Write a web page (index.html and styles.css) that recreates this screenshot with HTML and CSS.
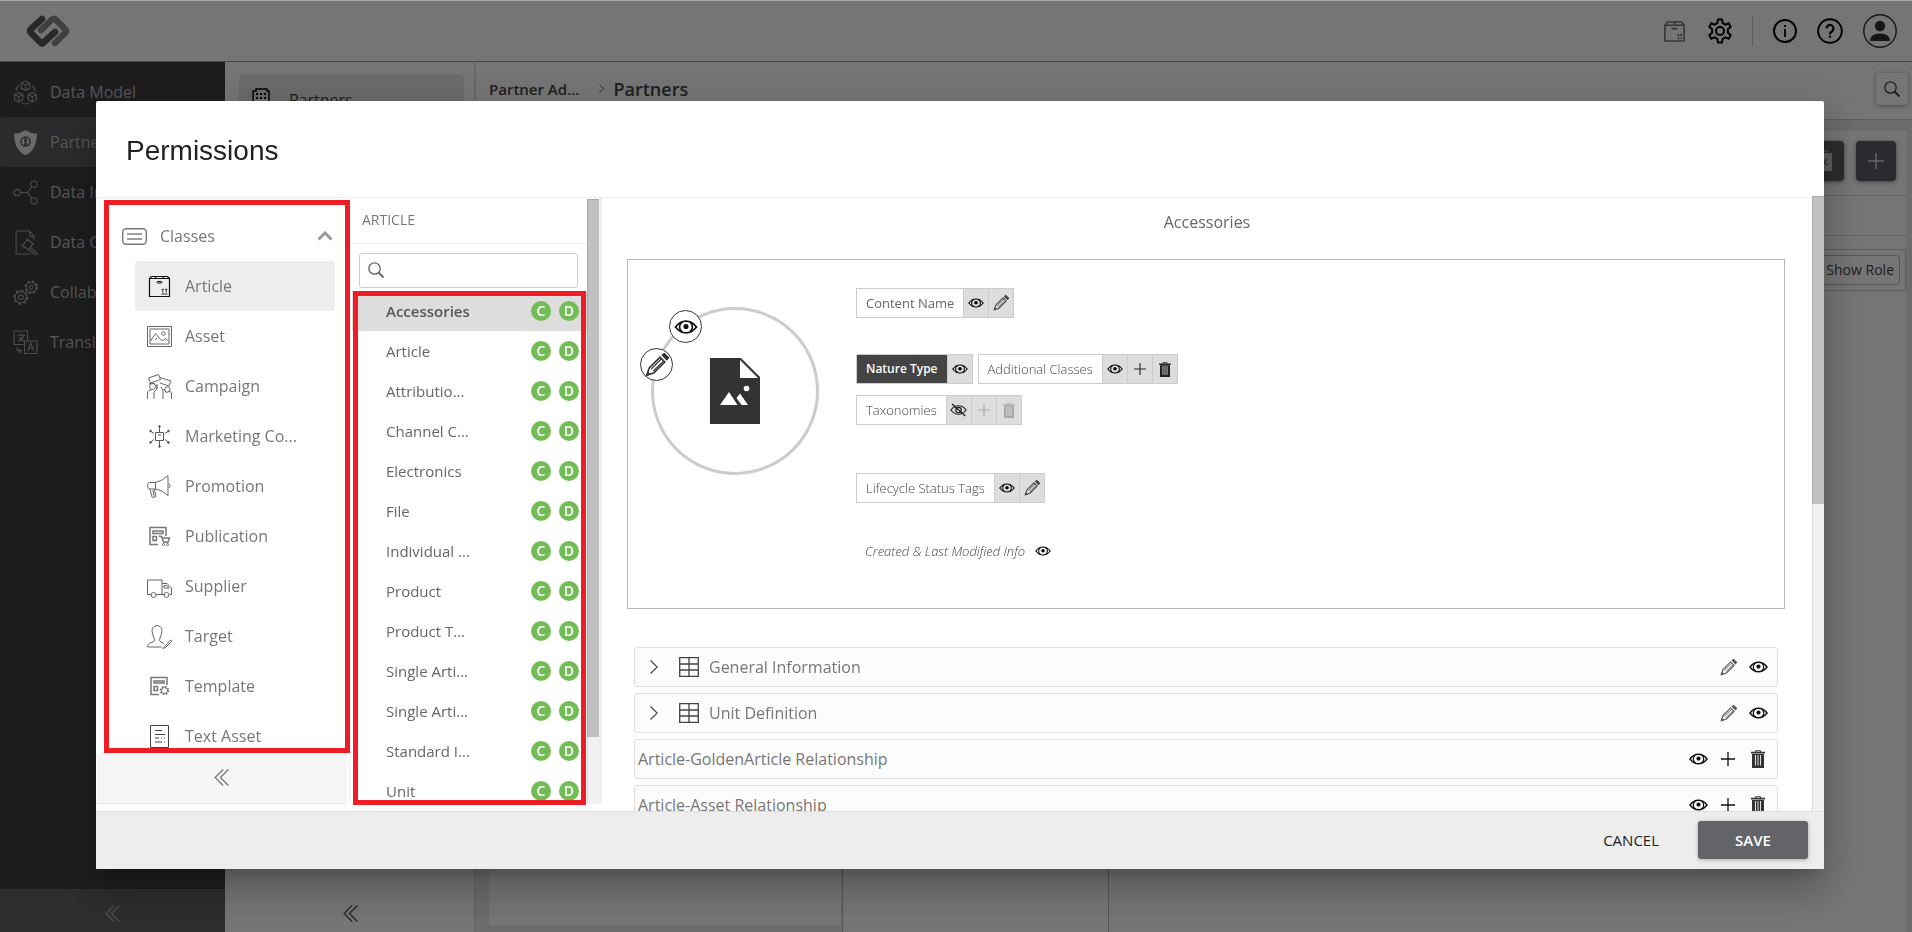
FILE: index.html
```html
<!DOCTYPE html>
<html lang="en">
<head>
<meta charset="utf-8">
<title>Permissions</title>
<link rel="stylesheet" href="styles.css">
</head>
<body>
<svg class="sprite" aria-hidden="true">
  <symbol id="eye" viewBox="0 0 20 12"><path d="M1 6C4 2.200 7 1 10 1s6 1.200 9 5c-3 3.800-6 5-9 5S4 9.800 1 6z" fill="none" stroke="currentColor" stroke-width="1.500"/><path d="M6.800 1.800a5 5 0 0 0 0 8.400M13.200 1.800a5 5 0 0 1 0 8.400" fill="none" stroke="currentColor" stroke-width="1.300"/><circle cx="10" cy="5.600" r="2.200" fill="currentColor"/></symbol>
  <symbol id="eye-off" viewBox="0 0 20 16"><path d="M1 8c3-3.800 6-5 9-5s6 1.200 9 5c-3 3.800-6 5-9 5S4 11.800 1 8z" fill="none" stroke="currentColor" stroke-width="1.400"/><circle cx="10" cy="8" r="3.200" fill="none" stroke="currentColor" stroke-width="1.400"/><path d="M2.500 1l15.500 14" stroke="currentColor" stroke-width="1.600"/></symbol>
  <symbol id="pencil" viewBox="0 0 20 20"><path d="M1.500 18.500l2-6L12.500 3.500l4 4-9 9z" fill="none" stroke="currentColor" stroke-width="1.300"/><path d="M14.500 1.800L16 .5 19.500 4 18.200 5.500z" fill="currentColor" stroke="currentColor" stroke-width="1.300"/><path d="M5 13.500L13.500 5M7 15l8.500-8.500" stroke="currentColor" stroke-width="1"/><path d="M1 19l1-4 3 3z" fill="currentColor"/></symbol>
  <symbol id="plus" viewBox="0 0 14 14"><path d="M7 0v14M0 7h14" stroke="currentColor" stroke-width="1.300"/></symbol>
  <symbol id="trash" viewBox="0 0 14 18"><path d="M4.500 2V.8h5V2" fill="none" stroke="currentColor"/><path d="M0 1.800h14v1.700H0zM1 4h12v14H1z" fill="currentColor"/><path d="M4.500 5v10.500M7 5v10.500M9.500 5v10.500" stroke="#ddd" stroke-width="1"/></symbol>
  <symbol id="search" viewBox="0 0 16 16"><circle cx="6.500" cy="6.500" r="5.700" fill="none" stroke="currentColor" stroke-width="1.300"/><path d="M10.500 10.500l5 5" stroke="currentColor" stroke-width="2"/></symbol>
  <symbol id="collapse" viewBox="0 0 14 16"><path d="M8.500.5L1 8l7.500 7.500M13.500.5L6 8l7.500 7.500" fill="none" stroke="currentColor" stroke-width="1.200"/></symbol>
  <symbol id="grid" viewBox="0 0 20 20"><path d="M.7.700h18.600v18.600H.7zM10 .7v18.600M.7 7h18.600M.7 13h18.600" fill="none" stroke="currentColor" stroke-width="1.300"/></symbol>
  <symbol id="next" viewBox="0 0 8 14"><path d="M.5.500L7.200 7 .5 13.500" fill="none" stroke="currentColor" stroke-width="1.200"/></symbol>
  <symbol id="box" viewBox="0 0 22 22"><path d="M1 4.500h20V21H1zM1 4.500L3.500 1h15L21 4.500M11 1v3.500M8 8h6" fill="none" stroke="currentColor" stroke-width="1.700"/><path d="M14 18.500h5M15 17v-3.500M18 17v-3.500M14 15l1-1.500 1 1.500M17 15l1-1.500 1 1.500" fill="none" stroke="currentColor"/></symbol>
</svg>

<div class="app">
  <header class="topbar">
    <svg class="logo" viewBox="0 0 45 32" aria-label="Logo" role="img"><g fill="none" stroke-width="6.500" stroke-linecap="round" stroke-linejoin="round"><path d="M17 4L6 14q-2 2 0 4l10 10q1 1 2 0l12-11" stroke="#585858"/><path d="M16 15L27 4.500q2-1.500 3.500 0L40 14q2 2 0 4L30 28" stroke="#8c8c8c"/></g></svg>
    <div class="tools">
      <button class="tool faded" aria-label="Articles"><svg width="21" height="21"><use href="#box"/></svg></button>
      <button class="tool gear" aria-label="Settings"><svg width="24" height="26" viewBox="0 0 24 26" fill="none" stroke="#000" stroke-width="2"><path d="M10 1.500h4l.7 3.700 2.500 1.400 3.500-1.300 2 3.500-2.800 2.400v3.600l2.800 2.400-2 3.500-3.500-1.300-2.500 1.400-.7 3.700h-4l-.7-3.700-2.500-1.400-3.500 1.300-2-3.500 2.800-2.400v-3.600L1.300 8.800l2-3.500 3.500 1.300 2.500-1.400z"/><circle cx="12" cy="13" r="4"/></svg></button>
      <span class="rule"></span>
      <button class="tool" aria-label="Information"><svg width="24" height="24" viewBox="0 0 24 24"><circle cx="12" cy="12" r="11" fill="none" stroke="#000" stroke-width="2"/><path d="M12 10v8M12 6v2" stroke="#000" stroke-width="1.800"/></svg></button>
      <button class="tool" aria-label="Help"><svg width="26" height="26" viewBox="0 0 26 26" fill="none" stroke="#000"><circle cx="13" cy="13" r="11.800" stroke-width="2"/><path d="M9.500 10.500a3.500 3.500 0 1 1 5.600 2.800Q13 14.500 13 16.500M13 17.800v2" stroke-width="2.200"/></svg></button>
      <button class="tool" aria-label="Account"><svg width="34" height="34" viewBox="0 0 34 34"><circle cx="17" cy="17" r="16.200" fill="none" stroke="#333" stroke-width="1.400"/><circle cx="17" cy="12" r="5.200" fill="#333"/><path d="M7 27q0-7.500 10-7.500T27 27z" fill="#333"/></svg></button>
    </div>
  </header>

  <div class="workspace">
    <nav class="sidebar">
      <a href="#" class="side"><svg viewBox="0 0 24 24"><path d="M12 1l4 2v5l-4 2-4-2V3zM8 3l4 2 4-2M12 5v5M5.500 12l4 2v5l-4 2-4-2v-5zM1.500 14l4 2 4-2M5.500 16v5M18.500 12l4 2v5l-4 2-4-2v-5zM14.500 14l4 2 4-2M18.500 16v5M6 5Q3 7 3 10.500M18 5q3 2 3 5.500M8.500 22q3.500 2 7 0"/></svg>Data Model</a>
      <a href="#" class="side active"><svg viewBox="0 0 24 24"><path d="M12 0q5 3.500 11 3.500Q23 19 12 24.500 1 19 1 3.500 7 3.500 12 0z" fill="#e6e6e6" stroke="none"/><circle cx="12" cy="11" r="4.300" stroke="#5f5f64" stroke-width="1.500"/><path d="M12 8v3.500M12 12v3" stroke="#5f5f64" stroke-width="2.500"/></svg>Partner Admin</a>
      <a href="#" class="side"><svg viewBox="0 0 24 24"><circle cx="4" cy="12" r="3"/><circle cx="20" cy="4" r="3"/><circle cx="20" cy="20" r="3"/><path d="M7 12h7l4-5.500M14 12l4 5.500"/></svg>Data Integration</a>
      <a href="#" class="side"><svg viewBox="0 0 24 24"><path d="M20 9V6l-4-5H3v22h14M16 1v5h4M9 15l5-6 5 4-4 6zM17 17l6 5.500-1.500 1.500-6-5.500M8 14l3 3M13 8l7 6"/></svg>Data Governance</a>
      <a href="#" class="side"><svg viewBox="0 0 24 24"><circle cx="7.500" cy="16.500" r="5.500"/><circle cx="7.500" cy="16.500" r="2.200"/><circle cx="17.500" cy="7" r="4.800"/><circle cx="17.500" cy="7" r="1.800"/><circle cx="7.500" cy="16.500" r="6.300" stroke-width="1.800" stroke-dasharray="2.400 2.500"/><circle cx="17.500" cy="7" r="5.600" stroke-width="1.800" stroke-dasharray="2.200 2.200"/></svg>Collaboration</a>
      <a href="#" class="side"><svg viewBox="0 0 24 24"><path d="M10 14H1V1h13v9M11 10.500h12v12H11zM4 5h8M8 3v2M10.500 5Q9 9 5 11M6 6.500q2 3.500 5 4M14 20l3-7.500 3 7.500M15 17.500h4M4 16v4h4M6 18l2 2-2 2"/></svg>Translations</a>
      <button class="collapse dark" aria-label="Collapse menu"><svg><use href="#collapse"/></svg></button>
    </nav>
    <nav class="subnav">
      <a href="#" class="partner"><svg width="20" height="24" viewBox="0 0 20 24" fill="none" stroke="#000"><path d="M1 24V3h3V1h11v2h2v21" stroke-width="1.400"/><path d="M4 6h12M4 10h12M4 14h12M4 18h8" stroke-width="1.800" stroke-dasharray="2 2"/><path d="M11 17l3-3 5 4" stroke-width="2"/></svg>Partners</a>
      <button class="collapse" aria-label="Collapse list"><svg><use href="#collapse"/></svg></button>
    </nav>
    <main class="main">
      <div class="crumbs"><b>Partner Ad...</b><svg width="5" height="9" viewBox="0 0 8 14"><use href="#next"/></svg><h2>Partners</h2><button class="find" aria-label="Search"><svg width="16" height="16"><use href="#search"/></svg></button></div>
      <div class="board">
        <div class="boardbar">
          <button class="square" aria-label="Delete"><svg width="18" height="22" viewBox="0 0 18 22"><path d="M1 3h16v18H1z" fill="#ccc"/><path d="M5 2V1h8v1" fill="none" stroke="#ccc"/><path d="M6 9l6 6M12 9l-6 6" stroke="#5f6066" stroke-width="1.500"/></svg></button>
          <button class="square" aria-label="Add"><svg width="16" height="16"><use href="#plus"/></svg></button>
        </div>
        <div class="strip"></div>
        <div class="columns">
          <div class="first"></div><div class="second"></div>
          <div class="third"><div class="rolebar"><button>Show Role</button></div></div>
        </div>
      </div>
    </main>
  </div>
</div>

<div class="overlay">
<section class="dialog" role="dialog" aria-labelledby="dlg-title">
  <header class="dialog-head"><h1 id="dlg-title">Permissions</h1></header>
  <div class="dialog-body">
    <aside class="classes">
      <div class="class-list">
        <button class="group"><svg width="25" height="17" viewBox="0 0 25 17" fill="none" stroke="#777" stroke-width="1.400"><rect x=".7" y=".7" width="23.600" height="15.600" rx="3.500"/><path d="M5 6h15M5 11h15" stroke="#444" stroke-width="1.200"/></svg><span>Classes</span><svg width="16" height="10" viewBox="0 0 16 10"><path d="M1.500 8.500L8 2l6.500 6.500" fill="none" stroke="#999" stroke-width="3"/></svg></button>
        <button class="klass on"><svg viewBox="0 0 25 25"><path d="M2.500 4.500h20v18h-20zM2.500 4.500l2-2h16l2 2M9 2.500L8 5M16 2.500l1 2.500" stroke="#111" stroke-width="1.200"/><rect x="10" y="7.500" width="5" height="1.500" rx=".8" stroke="#111"/><path d="M14.500 20h6M15.800 18.500v-3.500M19.200 18.500v-3.500M14.800 16l1-1.200 1 1.200M18.200 16l1-1.200 1 1.200" stroke="#333"/></svg>Article</button>
        <button class="klass"><svg viewBox="0 0 25 25"><path d="M.5 2.500h24v20H.5zM3 5h19v15H3zM3.500 17l5-7.500 5 6 3 1 2-2 3 2.500M8 16l2-2"/><circle cx="16.500" cy="9.500" r="1.800"/></svg>Asset</button>
        <button class="klass"><svg viewBox="0 0 25 25"><path d="M1.500 4l10-3.500 2 5-10 3.500zM13 3.500l11 3.500-2 5-9-3M.5 25v-7q1-2 4-2M7 25v-7l3-3V10M16 25v-8l-2-4M24.500 25v-6q-1-2-3-2M10 15l-1-4"/><circle cx="5.500" cy="12.500" r="3"/><circle cx="20.500" cy="15.500" r="2.700"/><path d="M2 10q3-2 6 0M16.500 15l3 4"/></svg>Campaign</button>
        <button class="klass"><svg viewBox="0 0 25 25"><path d="M8.500 8.500h8v8h-8zM11 11h3M12.500 8V3M12.500 17v5M7 9.500L4 7.500M7 15.500l-3 2.500M18 9.500l3-2M18 15.500l3 2.500" stroke="#555"/><g fill="#777" stroke="#444"><circle cx="12.500" cy="2.500" r=".8"/><circle cx="12.500" cy="22.500" r=".8"/><circle cx="3.500" cy="7" r=".8"/><circle cx="3.500" cy="18.500" r=".8"/><circle cx="21.500" cy="7" r=".8"/><circle cx="21.500" cy="18.500" r=".8"/></g></svg>Marketing Co...</button>
        <button class="klass"><svg viewBox="0 0 25 25"><path d="M3 8.500h5Q15 7.500 21 1.500v20Q15 16 9 15H3q-2.500 0-2.500-3.200T3 8.500zM8.500 8.500V15M3 15l2 8q2 .8 4-.5l-1.500-7.500M6 16l1 6M22 9.500q2.500 2 0 4.500"/></svg>Promotion</button>
        <button class="klass"><svg viewBox="0 0 25 25"><path d="M11 20.500H3v-17h16V12M6 7h10v2.500H6zM6 12.500h3.500v4H6zM12 12l2.500.5 2 5.500H21l1.500-4h-7" stroke="#777" stroke-width="1.500"/><circle cx="16.500" cy="20.500" r="1"/><circle cx="20.500" cy="20.500" r="1"/></svg>Publication</button>
        <button class="klass"><svg viewBox="0 0 25 25"><path d="M4 20.500H.5V6H15v14.500H9M15 9.500h5l4.500 4.500v6.500h-2M17.500 20.500H15M17 14v-2.500h3l2 2.500z"/><circle cx="6.500" cy="21" r="2.500"/><circle cx="19.500" cy="21" r="2.500"/></svg>Supplier</button>
        <button class="klass"><svg viewBox="0 0 25 25"><path d="M15 23H.5q0-4 5.500-5 2.500-1 1-4Q3 5 7 2.500q3-2 6 0 4 2.500 0 11.500-1.500 3 1 4l3 1.500M17.500 22.500l6-6.500q1.500 0 1 1.500l-6 6-2.500 1z"/></svg>Target</button>
        <button class="klass"><svg viewBox="0 0 25 25"><path d="M12 20.500H4v-17h16V11M7 7h10v2H7zM7 12.500h3.500v4H7z" stroke="#777" stroke-width="1.500"/><circle cx="17.500" cy="16.500" r="3"/><circle cx="17.500" cy="16.500" r="4" stroke-width="1.500" stroke-dasharray="1.500 1.640"/></svg>Template</button>
        <button class="klass"><svg viewBox="0 0 25 25"><path d="M3.500 1.500h18v22h-18zM8 6.500h7M8 10.500h10M8 14h4M8 18h7" stroke="#444"/><path d="M14 14h1M17 14h1M17 18h1" stroke="#444"/></svg>Text Asset</button>
      </div>
      <button class="collapse light" aria-label="Collapse classes"><svg><use href="#collapse"/></svg></button>
      <span class="mark mark-classes"></span>
    </aside>

    <div class="articles">
      <div class="article-col">
        <h3>ARTICLE</h3>
        <label class="searchbox"><svg width="16" height="16"><use href="#search"/></svg><input type="text" aria-label="Search articles"></label>
        <ul>
          <li class="on"><span>Accessories</span><i>C</i><i>D</i></li>
          <li><span>Article</span><i>C</i><i>D</i></li>
          <li><span>Attributio...</span><i>C</i><i>D</i></li>
          <li><span>Channel C...</span><i>C</i><i>D</i></li>
          <li><span>Electronics</span><i>C</i><i>D</i></li>
          <li><span>File</span><i>C</i><i>D</i></li>
          <li><span>Individual ...</span><i>C</i><i>D</i></li>
          <li><span>Product</span><i>C</i><i>D</i></li>
          <li><span>Product T...</span><i>C</i><i>D</i></li>
          <li><span>Single Arti...</span><i>C</i><i>D</i></li>
          <li><span>Single Arti...</span><i>C</i><i>D</i></li>
          <li><span>Standard I...</span><i>C</i><i>D</i></li>
          <li><span>Unit</span><i>C</i><i>D</i></li>
        </ul>
      </div>
      <div class="scroll"><div class="thumb tall"></div></div>
      <span class="mark mark-articles"></span>
    </div>

    <div class="detail">
      <h2>Accessories</h2>
      <div class="card">
        <div class="avatar">
          <svg width="50" height="66" viewBox="0 0 50 66"><path d="M0 0h31l19 19v47H0z" fill="#333"/><path d="M30 2v18h18z" fill="#fff"/><path d="M10 47l9-13 8.500 13zM26.500 40l3.500-4.500L38 47h-6.500z" fill="#fff"/><circle cx="36.500" cy="30.500" r="2.800" fill="#fff"/></svg>
          <button class="round see" aria-label="Image visible"><svg width="24" height="14"><use href="#eye"/></svg></button>
          <button class="round edit" aria-label="Edit image"><svg width="24" height="24"><use href="#pencil"/></svg></button>
        </div>
        <div class="tags">
          <div class="tag name"><span>Content Name</span><button aria-label="Visible"><svg class="i-eye"><use href="#eye"/></svg></button><button aria-label="Edit"><svg class="i-pen"><use href="#pencil"/></svg></button></div>
          <div class="tagrow">
            <div class="tag nature"><span>Nature Type</span><button aria-label="Visible"><svg class="i-eye"><use href="#eye"/></svg></button></div>
            <div class="tag"><span>Additional Classes</span><button aria-label="Visible"><svg class="i-eye"><use href="#eye"/></svg></button><button aria-label="Add"><svg class="i-plus"><use href="#plus"/></svg></button><button aria-label="Delete"><svg class="i-bin"><use href="#trash"/></svg></button></div>
          </div>
          <div class="tag taxo"><span>Taxonomies</span><button aria-label="Hidden"><svg class="i-off"><use href="#eye-off"/></svg></button><button class="dim" aria-label="Add"><svg class="i-plus"><use href="#plus"/></svg></button><button class="dim" aria-label="Delete"><svg class="i-bin"><use href="#trash"/></svg></button></div>
          <div class="tag life"><span>Lifecycle Status Tags</span><button aria-label="Visible"><svg class="i-eye"><use href="#eye"/></svg></button><button aria-label="Edit"><svg class="i-pen"><use href="#pencil"/></svg></button></div>
          <div class="info"><em>Created &amp; Last Modified Info</em><button aria-label="Visible"><svg class="i-eye"><use href="#eye"/></svg></button></div>
        </div>
      </div>
      <div class="sections">
        <div class="bar"><button class="open" aria-label="Expand"><svg width="8" height="14"><use href="#next"/></svg></button><svg class="i-grid"><use href="#grid"/></svg><span>General Information</span><button aria-label="Edit"><svg class="s-pen"><use href="#pencil"/></svg></button><button aria-label="Visible"><svg class="s-eye"><use href="#eye"/></svg></button></div>
        <div class="bar"><button class="open" aria-label="Expand"><svg width="8" height="14"><use href="#next"/></svg></button><svg class="i-grid"><use href="#grid"/></svg><span>Unit Definition</span><button aria-label="Edit"><svg class="s-pen"><use href="#pencil"/></svg></button><button aria-label="Visible"><svg class="s-eye"><use href="#eye"/></svg></button></div>
        <div class="bar"><span>Article-GoldenArticle Relationship</span><button aria-label="Visible"><svg class="s-eye"><use href="#eye"/></svg></button><button aria-label="Add"><svg class="s-plus"><use href="#plus"/></svg></button><button aria-label="Delete"><svg class="s-bin"><use href="#trash"/></svg></button></div>
        <div class="bar"><span>Article-Asset Relationship</span><button aria-label="Visible"><svg class="s-eye"><use href="#eye"/></svg></button><button aria-label="Add"><svg class="s-plus"><use href="#plus"/></svg></button><button aria-label="Delete"><svg class="s-bin"><use href="#trash"/></svg></button></div>
      </div>
    </div>
    <div class="scroll"><div class="thumb short"></div></div>
  </div>
  <footer class="dialog-foot"><button class="cancel">CANCEL</button><button class="save">SAVE</button></footer>
</section>
</div>
</body>
</html>
```
FILE: styles.css
```css
* { box-sizing: border-box; }
html, body { height: 100%; }
body {
  margin: 0;
  overflow: hidden;
  border-top: 1px solid #a9abab;
  background: #fff;
  color: #777;
  font: 16px/24px "Open Sans", "Noto Sans", sans-serif;
}
button { margin: 0; padding: 0; border: 0; background: none; color: inherit; font: inherit; }
h1, h2, h3, ul { margin: 0; padding: 0; font-weight: 400; }
a { color: inherit; text-decoration: none; }
svg { display: block; flex: none; }
.sprite { position: absolute; width: 0; height: 0; }

/* application behind the dialog */
.app { display: flex; flex-direction: column; height: 100%; }
.topbar {
  display: flex; align-items: center; justify-content: space-between;
  height: 61px; padding: 0 15px 0 25px; border-bottom: 1px solid #999;
}
.logo { width: 45px; height: 32px; }
.tools { display: flex; align-items: center; gap: 20px; }
.tool { display: flex; justify-content: center; }
.faded { width: 28px; color: #777; }
.rule { width: 1px; height: 30px; background: #ccc; }
.workspace { display: flex; flex: 1; min-height: 0; }
.sidebar { display: flex; flex-direction: column; width: 225px; padding-top: 5px; background: #414141; color: #bdbdbd; }
.side { display: flex; align-items: center; gap: 12px; height: 50px; padding-left: 13px; white-space: nowrap; }
.side svg { width: 25px; height: 25px; fill: none; stroke: #aaa; }
.side.active { border-radius: 4px; background: #5f5f64; }
.collapse { display: flex; align-items: center; justify-content: center; flex: none; height: 43px; margin-top: auto; padding-top: 6px; color: #777; }
.collapse svg { width: 15px; height: 17px; }
.collapse.dark { background: #626262; color: #aaa; }
.subnav { display: flex; flex-direction: column; width: 249px; padding-top: 13px; }
.subnav .collapse { color: #555; padding-left: 2px; }
.partner { display: flex; align-items: center; gap: 17px; height: 50px; margin: 0 10px 0 14px; padding-left: 13px; border-radius: 4px; background: #e9e9e9; color: #444; }
.main { display: flex; flex-direction: column; flex: 1; border-left: 2px solid #e4e4e4; }
.crumbs { display: flex; align-items: center; height: 58px; padding: 0 4px 4px 13px; border-bottom: 1px solid #ccc; color: #444; }
.crumbs b { font-size: 15px; font-weight: 600; }
.crumbs > svg { margin: 0 9px 0 20px; }
.crumbs h2 { font-size: 18px; font-weight: 600; }
.find { display: flex; align-items: center; justify-content: center; width: 32px; height: 32px; margin-left: auto; border-radius: 3px; box-shadow: 0 1px 4px #999; }
.board { display: flex; flex-direction: column; flex: 1; padding: 11px 6px 0 13px; background: #ebebeb; }
.boardbar { display: flex; justify-content: flex-end; gap: 12px; padding: 10px 10px 14px; border-bottom: 1px solid #d4d4d4; background: #fff; }
.square { display: flex; align-items: center; justify-content: center; width: 40px; height: 40px; border-radius: 4px; background: #5f6066; color: #ddd; box-shadow: 0 1px 4px #888; }
.strip { height: 40px; border-bottom: 1px solid #d4d4d4; background: #fff; }
.columns { display: flex; flex: 1; }
.first { width: 352px; margin-bottom: 7px; background: #fff; }
.second { width: 266px; margin-left: 1px; border-left: 1px solid #bbb; background: #fff; }
.third { flex: 1; padding-top: 13px; border-left: 1px solid #bbb; background: #fff; }
.rolebar { display: flex; justify-content: flex-end; padding: 5px; border: 1px solid #ccc; }
.rolebar button { height: 30px; padding: 0 5px; border: 1px solid #bbb; border-radius: 4px; color: #444; font-size: 14px; }

/* dialog */
.overlay { position: fixed; inset: 1px 0 0; display: flex; padding: 100px 88px 63px 96px; background: rgba(0, 0, 0, .54); }
.dialog {
  display: flex; flex-direction: column; flex: 1; min-width: 0;
  border-radius: 2px; background: #fff;
  box-shadow: 0 11px 15px -7px rgba(0, 0, 0, .2), 0 24px 38px 3px rgba(0, 0, 0, .14), 0 9px 46px 8px rgba(0, 0, 0, .12);
}
.dialog-head { display: flex; align-items: center; flex: none; height: 95px; padding: 4px 0 0 30px; }
h1 { color: #222; font: 28px/36px "Liberation Sans", Arial, sans-serif; }
.dialog-body { display: flex; flex: 1; min-height: 0; }
.classes, .articles { position: relative; margin: 1px 0 7px; border-top: 1px solid #eee; }
.classes { display: flex; flex-direction: column; width: 250px; margin-left: 1px; margin-right: 2px; border-bottom: 1px solid #e8e8e8; }
.class-list { flex: 1; min-height: 0; overflow: hidden; padding: 13px 12px 0 38px; }
.group { display: flex; align-items: center; width: 100%; height: 50px; }
.group svg:first-child { margin: 0 13px 0 -13px; }
.group span { flex: 1; text-align: left; }
.group svg:last-child { margin-right: 2px; }
.klass { display: flex; align-items: center; gap: 13px; width: 100%; height: 50px; padding-left: 12px; border-radius: 3px; text-align: left; }
.klass svg { width: 25px; height: 25px; fill: none; stroke: #666; }
.klass.on { background: #ededed; }
.collapse.light { height: 50px; padding: 0 2px 2px 0; background: #f5f5f5; }
.mark { position: absolute; z-index: 1; border: 5px solid #ee1c24; pointer-events: none; }
.mark-classes { inset: 2px -3px 50px 7px; }
.mark-articles { inset: 93px 13px -1px 3px; }
.articles { display: flex; width: 253px; border-left: 1px solid #eee; border-right: 3px solid #eee; }
.article-col { display: flex; flex-direction: column; flex: 1; min-width: 0; }
h3 { height: 46px; padding-left: 12px; border-bottom: 1px solid #eee; font-size: 14px; line-height: 44px; }
.searchbox { display: flex; align-items: center; gap: 8px; height: 35px; margin: 9px 9px 3px; padding: 0 0 2px 8px; border: 1px solid #ccc; border-radius: 3px; color: #666; }
.searchbox input { width: 100%; min-width: 0; border: 0; outline: 0; background: none; font: inherit; }
.articles ul { flex: 1; min-height: 0; overflow: hidden; margin-left: 2px; list-style: none; }
.articles li { display: flex; align-items: center; gap: 8px; height: 40px; padding: 0 8px 0 34px; color: #666; font-size: 15px; }
.articles li.on { background: #ddd; color: #555; font-weight: 600; }
.articles li span { flex: 1; }
.articles li i { width: 20px; height: 20px; border-radius: 50%; background: #72bc55; color: #fff; font: 600 14px/20px "Open Sans", sans-serif; text-align: center; }
.scroll { flex: none; width: 12px; background: #f1f1f1; box-shadow: inset 1px 0 #ddd; }
.articles .scroll { margin-top: 1px; }
.thumb { background: #c1c1c1; box-shadow: inset 1px 1px #aaa; }
.tall { height: 89%; }
.short { height: 50%; }

.detail { flex: 1; min-width: 0; overflow: hidden; margin-top: 1px; border-top: 1px solid #eee; }
.detail h2 { height: 61px; color: #666; font-size: 16px; font-weight: 500; line-height: 48px; text-align: center; }
.card { display: flex; gap: 37px; height: 350px; margin: 0 27px 38px 25px; padding: 28px 23px; border: 1px solid #b5b5b5; }
.avatar { position: relative; display: flex; align-items: center; justify-content: center; flex: none; width: 168px; height: 168px; margin-top: 19px; border: 3px solid #ccc; border-radius: 50%; }
.round { position: absolute; display: flex; align-items: center; justify-content: center; width: 33px; height: 33px; border: 1px solid #333; border-radius: 50%; background: #fff; color: #111; }
.see { top: 0; left: 15px; }
.edit { top: 38px; left: -14px; color: #333; }
.tags { display: flex; flex-direction: column; align-items: flex-start; color: #444; font-size: 13px; font-weight: 300; }
.tag { display: flex; height: 30px; border: 1px solid #ccc; }
.tag span { padding: 0 9px; line-height: 28px; }
.tag button, .info button { display: flex; align-items: center; justify-content: center; }
.tag button { width: 25px; border-left: 1px solid #ccc; background: #ddd; color: #222; }
.tag .dim { color: #aaa; }
.tag.name { color: #666; font-weight: 400; }
.tagrow { display: flex; gap: 5px; margin: 36px 0 11px; }
.nature span { background: #444; color: #fff; font-size: 12px; font-weight: 600; }
.life { margin: 48px 0 36px; }
.info { display: flex; align-items: center; gap: 10px; padding-left: 9px; }
.info button { color: #111; }
.i-eye { width: 16px; height: 10px; color: #000; }
.i-off { width: 17px; height: 14px; }
.i-pen { width: 16px; height: 16px; color: #444; }
.i-plus { width: 12px; height: 12px; }
.i-bin { width: 12px; height: 15px; }
.sections { display: flex; flex-direction: column; gap: 6px; margin: 0 34px 0 32px; }
.bar { display: flex; align-items: center; height: 40px; padding: 0 4px 0 3px; border: 1px solid #ddd; border-radius: 3px; background: #fcfcfc; }
.bar span { flex: 1; }
.bar button { display: flex; align-items: center; justify-content: center; width: 30px; height: 30px; color: #111; }
.bar .open { width: 32px; color: #444; }
.i-grid { width: 20px; height: 20px; margin: 0 10px 0 9px; color: #444; }
.s-eye { width: 19px; height: 12px; }
.s-pen { width: 17px; height: 17px; color: #555; }
.s-plus { width: 14px; height: 14px; }
.s-bin { width: 14px; height: 18px; color: #333; }
.dialog-foot { display: flex; align-items: center; justify-content: flex-end; flex: none; gap: 39px; height: 58px; padding: 0 16px 2px 0; border-top: 1px solid #ddd; background: #ededed; color: #222; font-size: 15px; }
.save { width: 110px; height: 38px; border-radius: 3px; background: #636468; color: #fff; font-weight: 600; box-shadow: 0 1px 4px #aaa; }
```
